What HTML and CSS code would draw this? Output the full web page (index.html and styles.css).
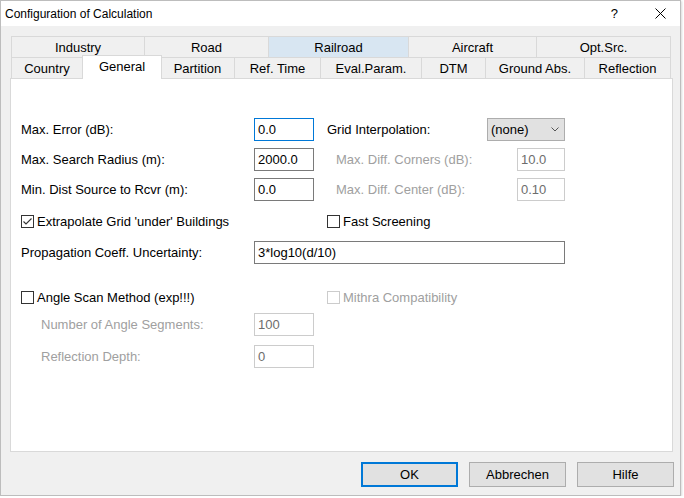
FILE: index.html
```html
<!DOCTYPE html>
<html lang="en">
<head>
    <meta charset="UTF-8">
    <title>Configuration of Calculation</title>
    <link rel="stylesheet" href="styles.css">
</head>
<body>
    <div class="window">
        <div class="titlebar">
            <span class="title">Configuration of Calculation</span>
            <span class="help">?</span>
            <span class="close">
                <svg width="11" height="11" viewBox="0 0 11 11"><path d="M0.5 0.5 L10.5 10.5 M10.5 0.5 L0.5 10.5" stroke="#000" stroke-width="1"/></svg>
            </span>
        </div>

        <div class="dialog">
            <div class="tabs">
                <div class="tab-row">
                    <div class="tab" style="width:134px">Industry</div>
                    <div class="tab" style="width:124px">Road</div>
                    <div class="tab hover" style="width:140px">Railroad</div>
                    <div class="tab" style="width:128px">Aircraft</div>
                    <div class="tab" style="width:134px">Opt.Src.</div>
                </div>
                <div class="tab-row">
                    <div class="tab" style="width:72px">Country</div>
                    <div class="tab active" style="width:78px">General</div>
                    <div class="tab" style="width:74px">Partition</div>
                    <div class="tab" style="width:86px">Ref. Time</div>
                    <div class="tab" style="width:101px">Eval.Param.</div>
                    <div class="tab" style="width:64px">DTM</div>
                    <div class="tab" style="width:99px">Ground Abs.</div>
                    <div class="tab" style="width:86px">Reflection</div>
                </div>
            </div>

            <div class="panel">
                <div class="row">
                    <span class="lbl">Max. Error (dB):</span>
                    <span class="field focus">0.0</span>
                    <div class="rcol">
                        <span>Grid Interpolation:</span>
                        <span class="combo">(none)
                            <svg width="8" height="5" viewBox="0 0 8 5"><path d="M0.5 0.5 L4 4 L7.5 0.5" fill="none" stroke="#555" stroke-width="1"/></svg>
                        </span>
                    </div>
                </div>
                <div class="row r-gap7">
                    <span class="lbl">Max. Search Radius (m):</span>
                    <span class="field">2000.0</span>
                    <div class="rcol sub">
                        <span class="disabled">Max. Diff. Corners (dB):</span>
                        <span class="field small off">10.0</span>
                    </div>
                </div>
                <div class="row r-gap7">
                    <span class="lbl">Min. Dist Source to Rcvr (m):</span>
                    <span class="field">0.0</span>
                    <div class="rcol sub">
                        <span class="disabled">Max. Diff. Center (dB):</span>
                        <span class="field small off">0.10</span>
                    </div>
                </div>
                <div class="row r-gap9">
                    <label class="check lbl-wide">
                        <span class="box">
                            <svg width="11" height="11" viewBox="0 0 11 11"><path d="M1.5 5.5 L4 8 L9.5 2.5" fill="none" stroke="#333" stroke-width="1.1"/></svg>
                        </span>
                        Extrapolate Grid 'under' Buildings
                    </label>
                    <label class="check">
                        <span class="box"></span>
                        Fast Screening
                    </label>
                </div>
                <div class="row r-gap8">
                    <span class="lbl">Propagation Coeff. Uncertainty:</span>
                    <span class="field wide">3*log10(d/10)</span>
                </div>
                <div class="row r-gap22">
                    <label class="check lbl-wide">
                        <span class="box"></span>
                        Angle Scan Method (exp!!!)
                    </label>
                    <label class="check disabled">
                        <span class="box"></span>
                        Mithra Compatibility
                    </label>
                </div>
                <div class="row r-gap4">
                    <span class="lbl indent disabled">Number of Angle Segments:</span>
                    <span class="field off">100</span>
                </div>
                <div class="row r-gap9">
                    <span class="lbl indent disabled">Reflection Depth:</span>
                    <span class="field off">0</span>
                </div>
            </div>

            <div class="buttons">
                <button class="default">OK</button>
                <button>Abbrechen</button>
                <button>Hilfe</button>
            </div>
        </div>
    </div>
</body>
</html>
```

FILE: styles.css
```css
body {
    margin: 0;
    background: #ffffff;
    font-family: "Liberation Sans", Arial, sans-serif;
    font-size: 13px;
    color: #000;
}
.window {
    width: 681px;
    height: 496px;
    box-sizing: border-box;
    border: 1px solid #bdbdbd;
    background: #f0f0f0;
    box-shadow: 1px 1px 2px rgba(0,0,0,0.15);
}
.titlebar {
    height: 25px;
    background: #fff;
    display: flex;
    align-items: center;
    font-size: 12px;
}
.title {
    margin-left: 4px;
    flex: 1;
}
.help {
    font-size: 13px;
    margin-right: 37px;
}
.close {
    display: flex;
    margin-right: 14px;
}
.dialog {
    padding: 10px 0 0 9px;
}
.tabs {
    margin-left: 1px;
    width: 660px;
}
.tab-row {
    display: flex;
    height: 21px;
}
.tab {
    box-sizing: border-box;
    border: 1px solid #d9d9d9;
    border-left: none;
    border-bottom: none;
    display: flex;
    align-items: center;
    justify-content: center;
    padding-top: 1px;
}
.tab-row .tab:first-child {
    border-left: 1px solid #d9d9d9;
}
.tab.hover {
    background: #d8e6f2;
}
.tab.active {
    background: #fff;
    position: relative;
    margin-top: -2px;
    height: 24px;
    margin-left: -1px;
    width: 80px !important;
    margin-right: -1px;
    border-left: 1px solid #d9d9d9;
    padding-top: 0;
    padding-bottom: 2px;
    z-index: 1;
}
.panel {
    width: 663px;
    height: 374px;
    box-sizing: border-box;
    background: #fff;
    border: 1px solid #d9d9d9;
    padding: 39px 0 0 10px;
}
.row {
    display: flex;
    align-items: center;
    height: 23px;
}
.r-gap4 { margin-top: 4px; }
.r-gap7 { margin-top: 7px; }
.r-gap8 { margin-top: 8px; }
.r-gap9 { margin-top: 9px; }
.r-gap22 { margin-top: 22px; }
.lbl {
    width: 233px;
}
.lbl.indent {
    width: 213px;
    padding-left: 20px;
}
.lbl-wide {
    width: 306px;
}
.field {
    box-sizing: border-box;
    width: 60px;
    height: 23px;
    line-height: 21px;
    border: 1px solid #7a7a7a;
    padding: 0 3px;
    background: #fff;
}
.field.focus {
    border-color: #0078d7;
}
.field.wide {
    width: 311px;
}
.field.small {
    width: 48px;
}
.field.off {
    border-color: #cccccc;
    color: #6d6d6d;
}
.disabled {
    color: #a0a0a0;
}
.rcol {
    margin-left: 13px;
    width: 238px;
    display: flex;
    justify-content: space-between;
    align-items: center;
}
.rcol.sub {
    box-sizing: border-box;
    padding-left: 9px;
}
.combo {
    box-sizing: border-box;
    width: 78px;
    height: 23px;
    background: #e1e1e1;
    border: 1px solid #adadad;
    display: flex;
    align-items: center;
    justify-content: space-between;
    padding: 0 5px 0 3px;
}
.check {
    display: flex;
    align-items: center;
}
.box {
    box-sizing: border-box;
    width: 13px;
    height: 13px;
    border: 1px solid #333;
    background: #fff;
    margin-right: 3px;
    display: flex;
    align-items: center;
    justify-content: center;
}
.check.disabled .box {
    border-color: #cccccc;
}
.buttons {
    display: flex;
    justify-content: flex-end;
    width: 664px;
    margin-top: 10px;
}
button {
    box-sizing: border-box;
    width: 97px;
    height: 25px;
    margin-left: 11px;
    background: #e1e1e1;
    border: 1px solid #adadad;
    font-family: "Liberation Sans", Arial, sans-serif;
    font-size: 13px;
    color: #000;
    padding: 0;
}
button.default {
    border: 2px solid #0078d7;
}
```
